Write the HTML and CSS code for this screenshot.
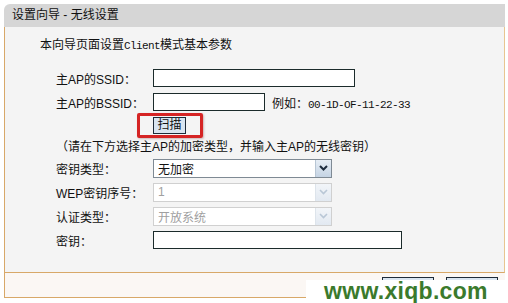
FILE: index.html
```html
<!DOCTYPE html>
<html lang="zh-CN">
<head>
    <meta charset="UTF-8">
    <title>设置向导 - 无线设置</title>
    <link rel="stylesheet" href="styles.css">
</head>
<body>
    <div class="wizard">
        <div class="title">设置向导 - 无线设置</div>
        <div class="panel">
            <div class="intro">本向导页面设置<span class="latin">Client</span>模式基本参数</div>
            <div class="form">
                <div class="row">
                    <span class="label">主AP的SSID：</span>
                    <span class="input ssid"></span>
                </div>
                <div class="row">
                    <span class="label">主AP的BSSID：</span>
                    <span class="input bssid"></span>
                    <span class="hint">例如：<span class="latin">00-1D-OF-11-22-33</span></span>
                </div>
                <div class="row scan-row">
                    <span class="label"></span>
                    <span class="scan-wrap">
                        <span class="scan">扫描</span>
                        <span class="highlight"></span>
                    </span>
                </div>
                <div class="row note">（请在下方选择主AP的加密类型，并输入主AP的无线密钥）</div>
                <div class="row">
                    <span class="label">密钥类型：</span>
                    <span class="select">
                        <span class="value">无加密</span>
                        <span class="arrow"><svg width="9" height="6" viewBox="0 0 9 6"><path d="M1 1 L4.5 4.5 L8 1" fill="none" stroke="#1d2c3e" stroke-width="2"/></svg></span>
                    </span>
                </div>
                <div class="row">
                    <span class="label">WEP密钥序号：</span>
                    <span class="select disabled">
                        <span class="value">1</span>
                        <span class="arrow"><svg width="9" height="6" viewBox="0 0 9 6"><path d="M1 1 L4.5 4.5 L8 1" fill="none" stroke="#b9c7d6" stroke-width="1.6"/></svg></span>
                    </span>
                </div>
                <div class="row">
                    <span class="label">认证类型：</span>
                    <span class="select disabled">
                        <span class="value">开放系统</span>
                        <span class="arrow"><svg width="9" height="6" viewBox="0 0 9 6"><path d="M1 1 L4.5 4.5 L8 1" fill="none" stroke="#b9c7d6" stroke-width="1.6"/></svg></span>
                    </span>
                </div>
                <div class="row">
                    <span class="label">密钥：</span>
                    <span class="input key"></span>
                </div>
            </div>
        </div>
        <div class="footer">
            <span class="btn"></span>
            <span class="btn"></span>
        </div>
    </div>
    <div class="watermark">www.xiqb.com</div>
</body>
</html>
```

FILE: styles.css
```css
body {
    margin: 0;
    width: 508px;
    height: 303px;
    overflow: hidden;
    background-color: #ffffff;
    font-family: "Liberation Sans", "Noto Sans CJK SC", sans-serif;
    font-size: 12px;
    color: #111111;
    position: relative;
}
.latin {
    font-family: "Liberation Mono", monospace;
    font-size: 11px;
    letter-spacing: -0.6px;
}
.wizard {
    margin: 4px 0 0 4px;
    width: 501px;
}
.title {
    height: 23px;
    line-height: 23px;
    padding-left: 8px;
    background-color: #d6d6d6;
    border-radius: 6px 0 0 0;
}
.panel {
    height: 246px;
    background-color: #f4f4f4;
    border-left: 1px solid #d8a868;
    border-right: 1px solid #e8c590;
    border-bottom: 1px solid #d8a868;
    box-sizing: border-box;
    padding-top: 6px;
}
.intro {
    height: 24px;
    line-height: 24px;
    padding-left: 35px;
    margin-bottom: 9px;
}
.form {
    padding-left: 51px;
}
.row {
    display: flex;
    align-items: center;
    height: 24px;
}
.label {
    width: 97px;
    flex-shrink: 0;
}
.input {
    height: 18px;
    box-sizing: border-box;
    border: 1px solid #1b2b2b;
    background-color: #ffffff;
}
.ssid {
    width: 202px;
}
.bssid {
    width: 112px;
}
.key {
    width: 249px;
}
.hint {
    margin-left: 7px;
}
.scan-row {
    height: 20px;
}
.scan-wrap {
    position: relative;
    display: inline-block;
    margin-top: 2px;
}
.scan {
    display: block;
    width: 33px;
    height: 17px;
    box-sizing: border-box;
    border: 1px solid #1d2a38;
    background-color: #d9e5f1;
    text-align: center;
    line-height: 15px;
}
.highlight {
    position: absolute;
    left: -16px;
    top: -4px;
    width: 66px;
    height: 25px;
    border: 3px solid #d52424;
    border-radius: 2px;
    box-sizing: border-box;
    box-shadow: 1px 1px 2px rgba(120, 40, 40, 0.3);
}
.note {
    height: 22px;
}
.select {
    display: flex;
    align-items: center;
    width: 179px;
    height: 19px;
    box-sizing: border-box;
    border: 1px solid #7f8a94;
    background-color: #ffffff;
}
.select .value {
    flex: 1;
    padding-left: 4px;
}
.select .arrow {
    display: flex;
    align-items: center;
    justify-content: center;
    width: 16px;
    height: 17px;
    box-sizing: border-box;
    border-left: 1px solid #b8c6d4;
    background: linear-gradient(#e6edf5, #c5d4e4);
}
.select.disabled {
    border-color: #d0d0d0;
    color: #a0a0a0;
}
.select.disabled .arrow {
    background: linear-gradient(#f2f5f9, #e2e9f1);
    border-left-color: #dde4eb;
}
.footer {
    height: 25px;
    background-color: #fbf7f4;
    border-left: 1px solid #d8a868;
    border-bottom: 1px solid #d8a868;
    box-sizing: border-box;
    display: flex;
    justify-content: flex-end;
    align-items: flex-start;
    gap: 12px;
    padding: 4px 7px 0 0;
}
.btn {
    width: 52px;
    height: 20px;
    box-sizing: border-box;
    border: 1px solid #1d2a38;
    background-color: #d9e5f1;
}
.watermark {
    position: absolute;
    left: 306px;
    top: 280px;
    width: 202px;
    height: 23px;
    background-color: #ffffff;
    color: #3b7a2c;
    font-weight: bold;
    font-size: 23px;
    line-height: 22px;
    padding-left: 18px;
    box-sizing: border-box;
    letter-spacing: 0.3px;
}
```
